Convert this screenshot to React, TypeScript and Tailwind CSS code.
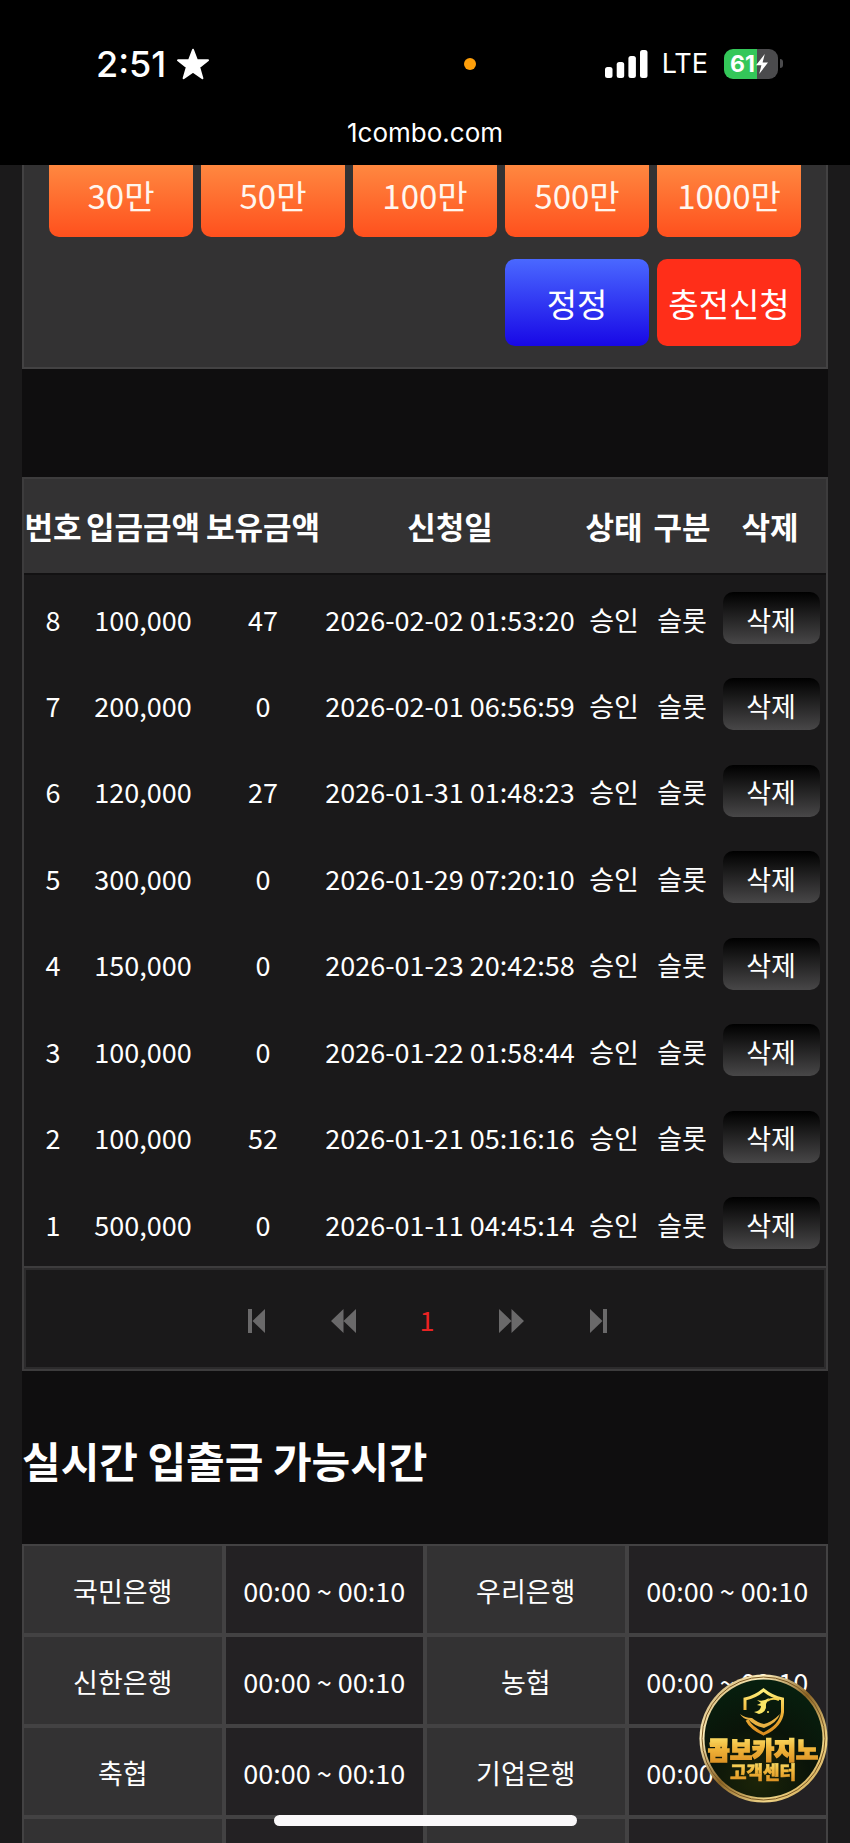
import React from "react";

const amounts = ["30만", "50만", "100만", "500만", "1000만"];

const columns = [
  { label: "번호", width: "w-[58px]" },
  { label: "입금금액", width: "w-[122px]" },
  { label: "보유금액", width: "w-[118px]" },
  { label: "신청일", width: "w-[256px]" },
  { label: "상태", width: "w-[72px]" },
  { label: "구분", width: "w-[64px]" },
  { label: "삭제", width: "w-[112px]" },
];

const deposits = [
  { no: 8, amount: "100,000", held: "47", date: "2026-02-02 01:53:20" },
  { no: 7, amount: "200,000", held: "0", date: "2026-02-01 06:56:59" },
  { no: 6, amount: "120,000", held: "27", date: "2026-01-31 01:48:23" },
  { no: 5, amount: "300,000", held: "0", date: "2026-01-29 07:20:10" },
  { no: 4, amount: "150,000", held: "0", date: "2026-01-23 20:42:58" },
  { no: 3, amount: "100,000", held: "0", date: "2026-01-22 01:58:44" },
  { no: 2, amount: "100,000", held: "52", date: "2026-01-21 05:16:16" },
  { no: 1, amount: "500,000", held: "0", date: "2026-01-11 04:45:14" },
];

const bankTime = "00:00 ~ 00:10";

const banks = [
  ["국민은행", bankTime, "우리은행", bankTime],
  ["신한은행", bankTime, "농협", bankTime],
  ["축협", bankTime, "기업은행", bankTime],
  ["", "", "", ""],
];

function StatusBar() {
  return (
    <header className="relative z-10 h-[165px] shrink-0 bg-black font-['Inter','Noto_Sans_CJK_KR',sans-serif] text-white">
      <div className="flex h-[127px] items-center pr-[67px] pl-24">
        <div className="flex flex-1 items-center gap-[10px] text-[36px] leading-10 font-medium">
          <span>2:51</span>
          <svg className="h-8 w-[34px]" viewBox="0 0 34 32" fill="#fff" stroke="#fff" strokeWidth="2" strokeLinejoin="round" aria-hidden="true">
            <path d="M17 1.8 L20.9 12 L32 12.3 L23.2 19.2 L26.4 30.2 L17 23.7 L7.6 30.2 L10.8 19.2 L2 12.3 L13.1 12 Z" />
          </svg>
        </div>
        <span className="mr-[129px] size-3 rounded-full bg-[#ff9f0a]" />
        <div className="flex items-center">
          <svg className="h-7 w-[43px]" viewBox="0 0 43 28" fill="#fff" aria-hidden="true">
            <rect x="0" y="17" width="7.5" height="11" rx="2.5" />
            <rect x="11.7" y="12" width="7.5" height="16" rx="2.5" />
            <rect x="23.4" y="6" width="7.5" height="22" rx="2.5" />
            <rect x="35" y="0" width="7.5" height="28" rx="2.5" />
          </svg>
          <span className="ml-[14px] text-[27px] leading-8">LTE</span>
          <div className="ml-4 flex h-[30px] w-[54px] items-center overflow-hidden rounded-[9px] bg-[linear-gradient(to_right,#34c759_61%,#4b4b4d_61%)] pl-[6px]">
            <span className="text-[23px] leading-7 font-bold">61</span>
            <svg className="h-[22px] w-[14px]" viewBox="0 0 14 22" fill="#fff" aria-hidden="true">
              <path d="M9.8 1 L1 12.2 H6.4 L4.2 21 L13 9.4 H7.6 Z" />
            </svg>
          </div>
          <span className="ml-[2px] h-[9px] w-[3px] rounded-r-full bg-[#4b4b4d]" />
        </div>
      </div>
      <p className="text-center text-[26px] leading-3">1combo.com</p>
    </header>
  );
}

function DepositPanel() {
  return (
    <section className="-mt-10 border-2 border-[#434243] bg-[#333233] px-[25px] pt-[23px] pb-[21px] text-[33px] text-[#fff6ee]">
      <div className="grid grid-cols-5 gap-x-2 gap-y-[22px]">
        {amounts.map((label) => (
          <button key={label} type="button" className="h-[87px] rounded-[10px] bg-linear-to-b/srgb from-[#ff9347] to-[#ff501d] pt-1">
            {label}
          </button>
        ))}
        <button type="button" className="col-start-4 h-[87px] rounded-[10px] bg-linear-to-b/srgb from-[#4a68ff] to-[#1808e6] pt-[3px] text-white">
          정정
        </button>
        <button type="button" className="h-[87px] rounded-[10px] bg-[#ff2e19] pt-[3px] whitespace-nowrap text-white">
          충전신청
        </button>
      </div>
    </section>
  );
}

function SkipIcon({ className }: { className?: string }) {
  return (
    <svg className={`h-6 w-[17px] ${className ?? ""}`} viewBox="0 0 17 24" fill="#6a696a" aria-hidden="true">
      <rect x="0" y="0" width="4" height="24" />
      <path d="M17 0 V24 L4.5 12 Z" />
    </svg>
  );
}

function RewindIcon({ className }: { className?: string }) {
  return (
    <svg className={`h-6 w-[25px] ${className ?? ""}`} viewBox="0 0 25 24" fill="#6a696a" aria-hidden="true">
      <path d="M12.5 0 V24 L0 12 Z M25 0 V24 L12.5 12 Z" />
    </svg>
  );
}

function Pagination() {
  return (
    <nav aria-label="페이지" className="border-2 border-[#3d3c3d] bg-[#1a191a]">
      <div className="flex h-[101px] items-center justify-center border-2 border-[#2c2b2c] pt-1 pl-1 text-[27px]">
        <a href="#first" aria-label="처음"><SkipIcon /></a>
        <a href="#prev" aria-label="이전" className="ml-[66px]"><RewindIcon /></a>
        <a href="#1" aria-current="page" className="mx-16 text-[#ea2323]">1</a>
        <a href="#next" aria-label="다음" className="mr-[66px]"><RewindIcon className="rotate-180" /></a>
        <a href="#last" aria-label="마지막"><SkipIcon className="rotate-180" /></a>
      </div>
    </nav>
  );
}

function DepositTable() {
  return (
    <section className="mt-[108px]">
      <div className="border-2 border-b-0 border-[#3d3c3d]">
        <table className="w-full table-fixed border-collapse bg-[#1a191a] text-center text-[27px] whitespace-nowrap">
          <thead>
            <tr className="h-[95px] border-b-2 border-[#121112] bg-[#333233] text-[31px]">
              {columns.map((c) => (
                <th key={c.label} className={`${c.width} p-0 font-bold`}>
                  <div className="flex justify-center">{c.label}</div>
                </th>
              ))}
            </tr>
          </thead>
          <tbody>
            {deposits.map((d) => (
              <tr key={d.no} className="h-[87px] even:h-[86px]">
                <td className="p-0 pt-1">{d.no}</td>
                <td className="p-0 pt-1">{d.amount}</td>
                <td className="p-0 pt-1">{d.held}</td>
                <td className="p-0 pt-1">{d.date}</td>
                <td className="p-0 pt-1">승인</td>
                <td className="p-0 pt-1">슬롯</td>
                <td className="p-0 pl-[2px]">
                  <button type="button" className="h-[52px] w-[97px] rounded-[10px] bg-linear-to-b/srgb from-black to-[#484748] pt-1">
                    삭제
                  </button>
                </td>
              </tr>
            ))}
          </tbody>
        </table>
      </div>
      <Pagination />
    </section>
  );
}

function BankTable() {
  return (
    <table className="w-full table-fixed border-separate border-spacing-0 text-center text-[27px] whitespace-nowrap">
      <tbody>
        {banks.map((row, r) => (
          <tr key={r} className="h-[91px]">
            {row.map((cell, c) =>
              c % 2 === 0 ? (
                <th key={c} scope="row" className="border-2 border-[#434243] bg-[#333233] p-0 pt-1 font-normal">{cell}</th>
              ) : (
                <td key={c} className="border-2 border-[#434243] bg-[#232123] p-0 pt-1">{cell}</td>
              ),
            )}
          </tr>
        ))}
      </tbody>
    </table>
  );
}

function SupportBadge() {
  return (
    <a href="#support" className="fixed right-[22px] bottom-10 z-20 block size-[129px]">
      <svg viewBox="0 0 129 129" className="size-full" role="img" aria-label="콤보카지노 고객센터">
        <defs>
          <linearGradient id="ring" x1="0" y1="0" x2="1" y2="1">
            <stop offset="0" stopColor="#a8803c" />
            <stop offset="0.25" stopColor="#fff0bd" />
            <stop offset="0.5" stopColor="#8a6425" />
            <stop offset="0.75" stopColor="#f1d689" />
            <stop offset="1" stopColor="#b98b34" />
          </linearGradient>
          <linearGradient id="gold" x1="0" y1="0" x2="0" y2="1">
            <stop offset="0" stopColor="#fff07a" />
            <stop offset="0.5" stopColor="#f0b53a" />
            <stop offset="1" stopColor="#d98a1e" />
          </linearGradient>
          <radialGradient id="felt" cx="0.45" cy="0.85" r="0.9">
            <stop offset="0" stopColor="#1c2408" />
            <stop offset="0.5" stopColor="#0a1409" />
            <stop offset="1" stopColor="#06210f" />
          </radialGradient>
        </defs>
        <circle cx="64.5" cy="64.5" r="64" fill="url(#ring)" />
        <circle cx="64.5" cy="64.5" r="61.5" fill="none" stroke="#7a5722" strokeWidth="1" />
        <circle cx="64.5" cy="64.5" r="59" fill="url(#felt)" />
        <path
          d="M46 36 V25 Q56 23 64.5 16 Q73 23 83.5 25 V38 Q82 52 64.5 60 Q52 54 48 46"
          fill="none"
          stroke="url(#gold)"
          strokeWidth="3"
        />
        <path d="M68 27 Q73 23 80 26" fill="none" stroke="#f6d34f" strokeWidth="2" />
        <path d="M41 40 Q46 44 53 44 Q59 49 65 50 Q73 48 81 40 Q78 49 65 54 Q54 51 50 46 Q44 45 41 40 Z" fill="#e9b143" />
        <path d="M58 26 Q64 28 70 24 L67 30 Q68 38 60 40 L55 38 Q62 37 62 32 L58 31 L62 29 Z" fill="#fae565" />
        <circle cx="69" cy="38" r="1" fill="#fae565" />
        <g fill="url(#gold)" stroke="url(#gold)" textAnchor="middle" fontFamily="Noto Sans CJK KR, sans-serif" fontWeight="900">
          <text x="64" y="85" fontSize="24" strokeWidth="1.5">콤보카지노</text>
          <text x="64" y="105" fontSize="18" strokeWidth="0.5">고객센터</text>
        </g>
      </svg>
    </a>
  );
}

export default function App() {
  return (
    <div className="flex h-screen flex-col overflow-hidden bg-[#1b1a1b] font-['Noto_Sans_CJK_KR',sans-serif] text-white">
      <StatusBar />
      <main className="mx-[22px] flex-1 bg-[#0f0e0f]">
        <DepositPanel />
        <DepositTable />
        <h1 className="mt-[58px] mb-[53px] text-[42px] leading-[62px] font-bold">실시간 입출금 가능시간</h1>
        <BankTable />
      </main>
      <SupportBadge />
      <div className="fixed inset-x-0 bottom-[17px] z-20 mx-auto h-[11px] w-[303px] rounded-full bg-[#faf8fa]" />
    </div>
  );
}
